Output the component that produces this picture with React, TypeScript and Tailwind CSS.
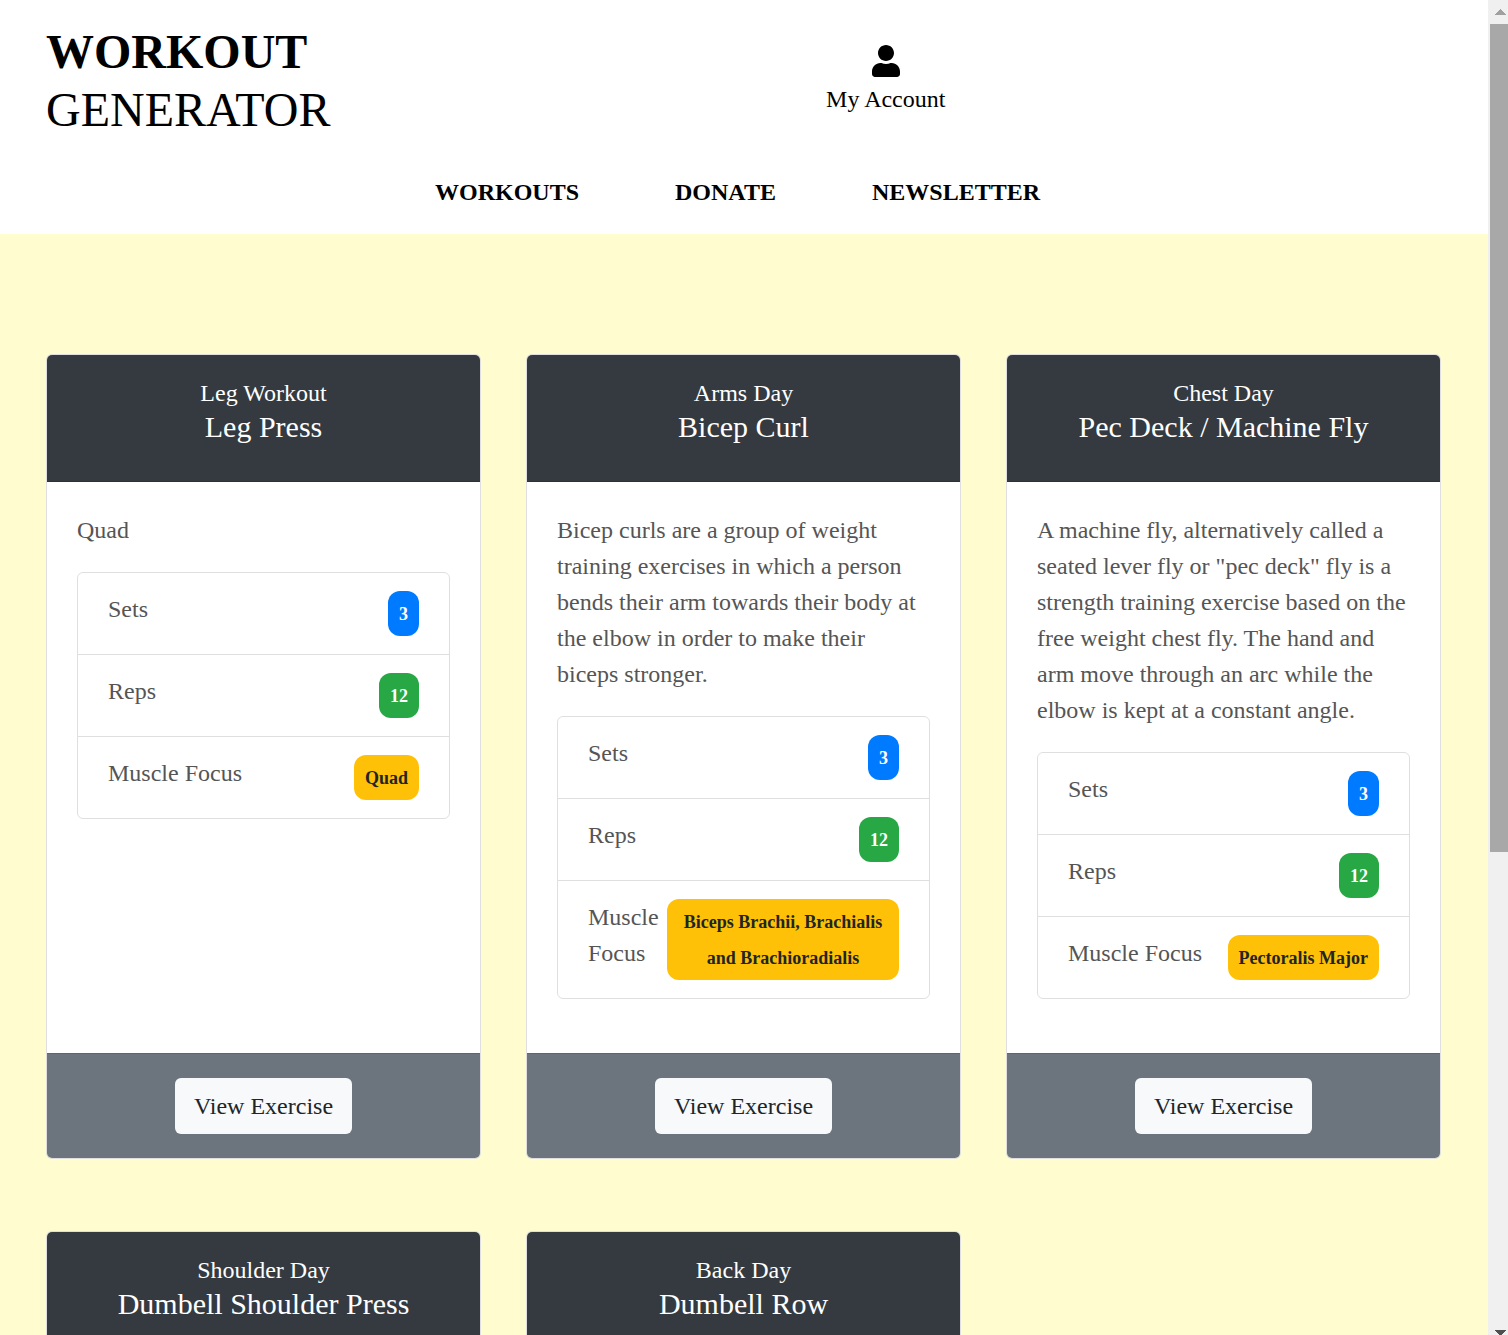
import React from "react";
import { FaUser } from "react-icons/fa";

type Details = {
  description: string;
  sets: number;
  reps: number;
  focus: string;
};

type Workout = {
  day: string;
  exercise: string;
  details?: Details;
};

const workouts: Workout[] = [
  {
    day: "Leg Workout",
    exercise: "Leg Press",
    details: { description: "Quad", sets: 3, reps: 12, focus: "Quad" },
  },
  {
    day: "Arms Day",
    exercise: "Bicep Curl",
    details: {
      description:
        "Bicep curls are a group of weight training exercises in which a person bends their arm towards their body at the elbow in order to make their biceps stronger.",
      sets: 3,
      reps: 12,
      focus: "Biceps Brachii, Brachialis and Brachioradialis",
    },
  },
  {
    day: "Chest Day",
    exercise: "Pec Deck / Machine Fly",
    details: {
      description:
        'A machine fly, alternatively called a seated lever fly or "pec deck" fly is a strength training exercise based on the free weight chest fly. The hand and arm move through an arc while the elbow is kept at a constant angle.',
      sets: 3,
      reps: 12,
      focus: "Pectoralis Major",
    },
  },
  { day: "Shoulder Day", exercise: "Dumbell Shoulder Press" },
  { day: "Back Day", exercise: "Dumbell Row" },
];

function StatRow({ label, value, tone }: { label: string; value: string | number; tone: string }) {
  return (
    <li className="flex items-start justify-between px-[30px] py-[18px]">
      <span>{label}</span>
      <span
        className={`rounded-xl px-[11px] pt-[5px] pb-1 text-center text-lg leading-9 font-bold ${tone}`}
      >
        {value}
      </span>
    </li>
  );
}

function CardDetails({ details }: { details: Details }) {
  return (
    <>
      <div className="flex-1 px-[30px] pt-[30px] pb-[54px] text-[#555]">
        <p className="mb-6">{details.description}</p>
        <ul className="divide-y divide-black/[.125] rounded-md border border-black/[.125]">
          <StatRow label="Sets" value={details.sets} tone="bg-[#007bff] text-white" />
          <StatRow label="Reps" value={details.reps} tone="bg-[#28a745] text-white" />
          <StatRow label="Muscle Focus" value={details.focus} tone="bg-[#ffc107] text-[#212529]" />
        </ul>
      </div>
      <footer className="flex justify-center border-t border-black/[.125] bg-[#6c757d] py-6">
        <button type="button" className="rounded-md bg-[#f8f9fa] px-[19px] py-[10px] text-[#212529]">
          View Exercise
        </button>
      </footer>
    </>
  );
}

function WorkoutCard({ workout }: { workout: Workout }) {
  return (
    <article className="flex flex-col overflow-hidden rounded-md border border-black/[.125] bg-white">
      <header className="border-b border-black/[.125] bg-[#343a40] pt-[22px] pb-9 text-center text-white">
        <p className="leading-8">{workout.day}</p>
        <h2 className="text-[30px] leading-9">{workout.exercise}</h2>
      </header>
      {workout.details && <CardDetails details={workout.details} />}
    </article>
  );
}

function ScrollTrack() {
  return (
    <div aria-hidden="true" className="flex w-5 shrink-0 flex-col overflow-hidden bg-[#f0f0f0]">
      <svg className="h-6 w-5 shrink-0" viewBox="0 0 20 24" shapeRendering="crispEdges">
        <path d="M7 15V14H8V13H9V12H10V11H11V10H12V9H13V10H14V11H15V12H16V13H17V14H18V15Z" fill="#a0a0a0" />
      </svg>
      <div className="ml-0.5 h-[62%] shrink-0 bg-[#a8a8a8]" />
      <svg className="mt-auto h-[5px] w-5 shrink-0" viewBox="0 0 20 5" shapeRendering="crispEdges">
        <path d="M7 0H18V1H17V2H16V3H15V4H14V5H11V4H10V3H9V2H8V1H7Z" fill="#505050" />
      </svg>
    </div>
  );
}

export default function App() {
  return (
    <div className="flex h-screen overflow-hidden font-['Liberation_Serif',serif] text-2xl leading-9 text-black">
      <div className="min-w-0 flex-1 overflow-hidden bg-[#fffcd0]">
        <header className="bg-white pt-[23px] pb-6">
          <div className="grid grid-cols-[19fr_15fr] px-[46px]">
            <h1>
              <a href="#home" className="block text-5xl leading-[58px]">
                <strong className="block font-bold">WORKOUT</strong>
                GENERATOR
              </a>
            </h1>
            <a href="#account" className="flex flex-col items-center justify-self-start pt-[22px]">
              <FaUser className="mb-1 h-8 w-7" />
              My Account
            </a>
          </div>
          <nav className="mt-[35px] flex justify-center gap-24 pr-[13px] font-bold">
            <a href="#workouts">WORKOUTS</a>
            <a href="#donate">DONATE</a>
            <a href="#newsletter">NEWSLETTER</a>
          </nav>
        </header>
        <main className="grid grid-cols-3 gap-x-[45px] gap-y-[72px] pt-[120px] pr-[47px] pl-[46px]">
          {workouts.map((workout) => (
            <WorkoutCard key={workout.day} workout={workout} />
          ))}
        </main>
      </div>
      <ScrollTrack />
    </div>
  );
}
